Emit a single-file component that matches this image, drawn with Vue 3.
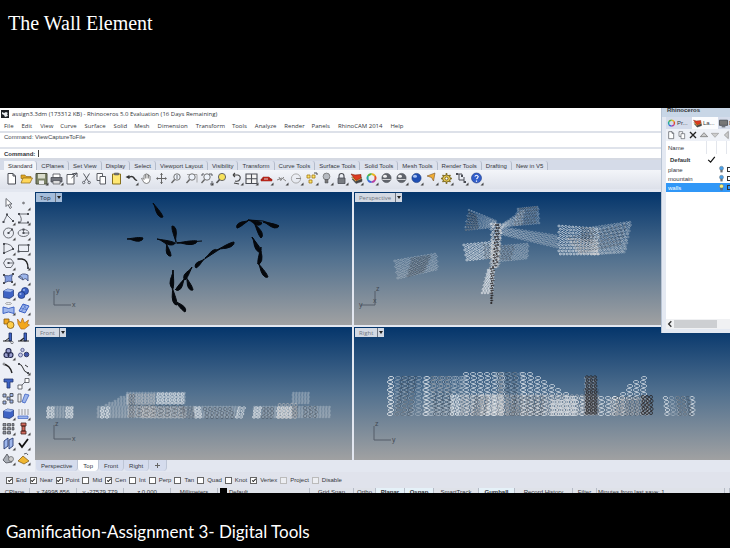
<script setup>
const menus = ['File', 'Edit', 'View', 'Curve', 'Surface', 'Solid', 'Mesh', 'Dimension', 'Transform', 'Tools', 'Analyze', 'Render', 'Panels', 'RhinoCAM 2014', 'Help']
const toolTabs = ['Standard', 'CPlanes', 'Set View', 'Display', 'Select', 'Viewport Layout', 'Visibility', 'Transform', 'Curve Tools', 'Surface Tools', 'Solid Tools', 'Mesh Tools', 'Render Tools', 'Drafting', 'New in V5']
const viewTabs = ['Perspective', 'Top', 'Front', 'Right']
const snaps = [
  ['End', true], ['Near', true], ['Point', true], ['Mid', false], ['Cen', true], ['Int', false], ['Perp', false],
  ['Tan', false], ['Quad', false], ['Knot', false], ['Vertex', true], ['Project', false, true], ['Disable', false, true]
]
const status = [
  ['CPlane'], ['x 74998.856'], ['y -27579.779'], ['z 0.000'], ['Millimeters'], ['Default', 'swatch'], ['Grid Snap'], ['Ortho'],
  ['Planar', 'on'], ['Osnap', 'on'], ['SmartTrack'], ['Gumball', 'on'], ['Record History'], ['Filter'], ['Minutes from last save: 1', 'left'], ['']
]
const layers = [
  { name: 'Default', current: true }, { name: 'plane' }, { name: 'mountain' }, { name: 'walls', selected: true }
]

// Icon shapes: [path, fill, stroke, stroke width] on a 15 x 15 grid
const K = '#4a4d54'
const B = '#3d62c4'
const L = '#9db6ec'
const o = (x, y, r, s = r) => `M${x - r} ${y}a${r} ${s} 0 1 0 ${2 * r} 0a${r} ${s} 0 1 0 ${-2 * r} 0Z`
const dots = (...p) => p.map(([x, y]) => `M${x - 1} ${y - 1}h2v2h-2Z`).join('')
const page = ['M4 2.5h5l2.5 2.5v8H4ZM9 2.5v2.5h2.5', '#fff', K, 1]
const lens = [[o(8, 6, 3.2), '#eef3fb', '#666', 0.9], ['M5.6 8.5L2.5 12', 'none', '#666', 1.4]]
const bulb = c => [[o(7.5, 5.5, 3.4), c, '#666', 0.7], ['M6 8.5h3v3.5h-3Z', '#777', K, 0.5]]
const ball = (a, b) => [[o(7.5, 7, 4.6), a, K, 0.6], [o(6, 5.2, 2, 1.5), b], ['M3.4 8.5h8.2', 'none', b, 0.8]]
const wheel = [
  ['M7.5 3A4 4 0 0 1 11 5', 'none', '#e8b51e', 2], ['M11 5A4 4 0 0 1 11 9', 'none', '#e05030', 2],
  ['M11 9A4 4 0 0 1 7.5 11', 'none', '#b53fa0', 2], ['M7.5 11A4 4 0 0 1 4 9', 'none', '#3b66d8', 2],
  ['M4 9A4 4 0 0 1 4 5', 'none', '#23a7a5', 2], ['M4 5A4 4 0 0 1 7.5 3', 'none', '#56b33c', 2]
]
const stack = [
  ['M3 8l4 4.5 6-2V8Z', '#444', K, 0.5], ['M2.5 6l4 4.5 6-2.5V6Z', '#f2c14b', K, 0.4], ['M2 3l4 1 6-.5V7L7 9.5Z', '#dd3b20', '#812312', 0.6]
]
const top = [
  ['New', [page]],
  ['Open', [['M2 4h4l1 1.5h5v2H2Z', '#e1a723', '#8a6410', 0.6], ['M2 12l2-5h9.5l-2.5 5Z', '#ffd75a', '#8a6410', 0.7]]],
  ['Save', [['M2 2.5h11v10.5H2Z', '#7d8468', '#4c503e', 1], ['M4 3h7v4.5H4Z', '#d9dccb'], ['M5 9.5h5V13H5Z', '#eee']], 1],
  ['Print', [['M4 3h7v4H4Z', '#fff', K, 0.8], ['M2 6.5h11V11H2Z', '#72757d', K, 0.8], ['M4 9.5h7V13H4Z', '#ddd', K, 0.7]], 1],
  ['Notes', [['M3 3.5h7v9.5H3Z', '#fff', K, 0.9], ['M8 3l5-1v4M7.5 7L13 2', 'none', K, 1]]],
  ['Cut', [['M4.5 2.5l5 8M10.5 2.5l-5 8', 'none', K, 0.9], [o(4.7, 11.5, 1.2) + o(10.2, 11.5, 1.2), 'none', K, 0.8]]],
  ['Copy', [['M3 2.5h5.5v7H3Z', '#fff', K, 0.9], ['M6 5.5h5.5V13H6Z', '#fff', K, 0.9]]],
  ['Paste', [['M3.5 3h8v10h-8Z', '#ffe873', '#87701d', 1], ['M5.5 2h4v2h-4Z', '#777', K, 0.5]]],
  ['Undo', [['M4 7Q8 4 10 7t3 2', 'none', '#333', 1.5], ['M1.5 6l4-2v4Z', '#333']], 1],
  ['Pan', [['M3.5 9L2.5 7.5l1-.5L5 8.5V4.2q.8-.8 1.5 0V3.2q.8-.8 1.5 0v.5q.8-.8 1.5 0V5q.8-.8 1.5 0v4q-.5 3.5-3.5 3.5T3.5 9Z', '#fff', '#666', 0.8], ['M6.5 4.2V7.5M8 3.5v4M9.5 4.5v3', 'none', '#666', 0.7]]],
  ['Rotate View', [['M7.5 2v11M3 7.5h9', 'none', '#666', 1], ['M6 4l1.5-2L9 4ZM6 11l1.5 2L9 11ZM4 6l-2 1.5L4 9ZM11 6l2 1.5L11 9Z', '#666']]],
  ['Zoom', [...lens, ['M8 4v4', 'none', K, 0.8]]],
  ['Zoom Window', [['M3 3.5h10v8', 'none', '#888', 0.7], ...lens]],
  ['Zoom Extents', [...lens, ['M3 5V3h2M10 3h3v2M13 10v3h-2', 'none', K, 0.9]], 1],
  ['Zoom Selected', [[o(8, 6, 3.6), '#f7e25a', '#666', 1], ['M5.6 8.5L2.5 12', 'none', '#555', 1.6]]],
  ['Undo View', [['M4 4h5q3 1 2 4t-5 2M4 4l2-2M4 4l2 2M5 12l5 1', 'none', '#444', 1.1]], 1],
  ['Viewports', [['M2 3h11v9.5H2ZM7.5 3v9.5M2 7.7h11', '#f4f4f4', K, 1.1]], 1],
  ['Display', [['M2 8h11v2H2ZM4 6h6l2 2H3Z', '#c92a1d', '#891b12', 0.5], ['M5 8h4', 'none', '#fff', 0.8]], 1],
  ['Sections', [['M3 9l5-2 4 3M5 6l2 4M10 6L7 9', 'none', '#888', 1]], 1],
  ['Circle', [[o(7, 7.5, 4.6), 'none', '#999', 0.8], ['M7 7.5h5', 'none', '#777', 0.8]], 1],
  ['Select', [['M3 4h3v3H3ZM8 4h3v3H8ZM5 9h3v3H5Z', '#ffe66b', '#a37912', 0.8], ['M10 2h3v2', 'none', K, 1]], 1],
  ['Hide', bulb('#b6bac0'), 1],
  ['Lock', [['M5 7V5a2.5 2.5 0 0 1 5 0v2', 'none', K, 1.1], ['M4 7h7v5.5H4Z', '#777b80', K, 0.8]], 1],
  ['Layers', stack, 1],
  ['Color', wheel, 1],
  ['Shade', ball('#60646b', '#f0f0f0')],
  ['Render Preview', ball('#60646b', '#f0f0f0'), 1],
  ['Render', [[o(7.5, 7, 4.6), '#1f4fb4', '#163878', 0.6], [o(6, 5.2, 2, 1.5), '#a9c4f3']], 1],
  ['Spotlight', [['M3 5l8-3-1.5 8-2-3.5Z', '#f1ad34', '#77542b', 0.6]], 1],
  ['Options', [
    ['M7.5 2v11M2 7.5h11M3.5 4l8 7M11.5 4l-8 7', 'none', '#85732c', 1.6],
    [o(7.5, 7.5, 4, 3.5), '#e8ca52', '#665417', 0.8], [o(7.5, 7.5, 1.5), '#fff', '#665417', 0.8]
  ], 1],
  ['Grasshopper', [['M3 3h5v2M5 3v6h5v3M10 6v3', 'none', K, 1], [dots([3, 3], [8, 5], [11, 11]), K]], 1],
  ['Help', [[o(7.5, 7, 5), '#315ecb', '#1e3a83', 0.6], ['M5.8 5.5q1.7-2.5 3.4 0 0 1-1.7 2.5M7.5 9.5v1.3', 'none', '#fff', 1.2]], 1]
]
const cube = [['M2.5 5l4-2 6 1v6l-4 2.5-6-1Z', B, '#1d3373', 0.7], ['M2.5 5l4-2 6 1-3 2Z', L]]
const side = [
  ['Select', [['M5 2.5v8l2-2 2 4 1.5-1-2-3.5h2.5Z', '#fff', K, 0.8]]],
  ['Point', [[o(7.5, 7, 1), '#999', K, 0.5]], 1],
  ['Polyline', [['M2.5 11L6 4l6 6', 'none', K, 0.8], [dots([2.5, 11], [6, 3.5], [12, 10]), K]], 1],
  ['Curve', [['M3 3h8M3 3q4 5 1 9h7', 'none', K, 0.8], [dots([3, 3], [12, 3], [3, 11.5], [12, 11.5]), K]], 1],
  ['Circle', [[o(7.5, 7, 5), 'none', K, 0.8], ['M7.5 7l3-3', 'none', K, 0.8], [dots([7.5, 7], [11, 3.5]), K]], 1],
  ['Ellipse', [[o(7.5, 7, 5.4, 3.5), 'none', K, 0.8], ['M7.5 7V3.5M7.5 7h5', 'none', K, 0.7], [dots([7.5, 7], [7.5, 3.5]), K]], 1],
  ['Arc', [['M3 2.5Q11 3 12 8L3 12Z', 'none', K, 0.8], [dots([3, 3], [12, 8], [3, 12]), K]], 1],
  ['Rectangle', [['M2.5 4h10v6.5h-10Z', 'none', K, 0.9], [dots([2.5, 10.5], [12.5, 4]), K]], 1],
  ['Polygon', [['M5 3h5l3 4-3 4.5H5L2.5 7Z', 'none', K, 0.8], ['M7.5 7h5', 'none', K, 0.8], [dots([7.5, 7]), K]], 1],
  ['Fillet', [['M2 3h4q6 1 6 9', 'none', '#222', 1.3], [dots([2.5, 3], [12, 12]), K]], 1],
  ['Surface', [['M3.5 4.5q4 1 8-1-1.5 3-.5 7-4-1-7 1 1-4-.5-7Z', '#7f9ade', '#26396f', 0.7], [dots([3, 4], [12, 3], [11, 11], [3, 12]), K]], 1],
  ['Loft', [['M2.5 6Q6 1 12 4v6q-2-4-5-1Z', L, '#344275', 0.8], ['M2 6q4-2 5 3', 'none', K, 0.7]], 1],
  ['Box', cube, 1],
  ['Boolean', [[o(9, 5, 3.5), B, '#1d3373', 0.7], [o(5.5, 9, 3.5), B, '#1d3373', 0.7], [o(8, 4, 1) + o(4.5, 8, 1), L]], 1],
  ['Shell', [['M2 6q5.5 3 11 0v6.5q-5.5-3-11 0Z', L, B, 1], [o(7.5, 2.5, 3, 1), 'none', '#888', 0.7]], 1],
  ['Plane', [['M3 10l4-7 6 2-4 7Z', L, B, 1], ['M5 7l6 2M7 3l4 6M10 4l-5 7', 'none', B, 0.6]], 1],
  ['Join', [['M3 3h5v5H3Z', '#f2a71c', '#7f5710', 0.8], [o(9.5, 9, 3.5), '#ffcd47', '#7f5710', 0.8]]],
  ['Explode', [['M1.5 3l3 4 2-5 2 5 4-3-1 4 2 1-5 4H5L2 8Z', '#f2a71c', '#a15917', 0.6]]],
  ['Trim', [['M8 2h2.5v8H8Z', B, '#162959', 0.8], ['M2 10h8M4 10l4-3', 'none', '#222', 1], [o(11, 11.5, 1.2), '#fff', K, 0.7]]],
  ['Split', [['M8 2h2.5v8H8Z', B, '#162959', 0.8], ['M2 10h11M4 10l4-3', 'none', '#222', 1.2]]],
  ['Group', [[o(7.5, 5, 2.5) + o(5.5, 9, 2.5) + o(9.5, 9, 2.5), '#9aa0d0', '#23284d', 1.1]], 1],
  ['Ungroup', [[o(6.5, 4, 1.7) + o(4.5, 9, 2), '#c5c9e4', '#444d85', 0.8], [o(10.5, 8.5, 2.3), '#4358ab', '#23284d', 0.8]]],
  ['Extend', [['M2 3q7 1 9 9', 'none', '#222', 1.4], [o(3, 3, 1), '#fff', K, 0.6]]],
  ['Blend', [['M2 3q4 0 5 4t5 5M9 4l3 2', 'none', '#333', 1], [dots([3, 3], [12, 12]), K]], 1],
  ['Text', [['M3 3h9v3h-3v6H6V6H3Z', B, '#25366c', 0.8]]],
  ['Move', [['M2 9h4v4H2ZM9 2.5h4v4H9Z', '#fff', K, 0.8], ['M6 9l3-3', 'none', K, 0.8]], 1],
  ['Array', [['M2 3h3v3H2ZM9 2.5h3v3H9ZM2 10h3v3H2ZM9 9h3v3H9ZM6 6h3v3H6Z', L, K, 0.9]]],
  ['Rotate', [['M2 3h3v8H2Z', '#eee', K, 0.8], ['M9 3l4 1-4 8-3-1Z', L, B, 0.8]]],
  ['Solid', cube, 1],
  ['Project', [['M2 10h10v2.5H2Z', L, B, 0.7], ['M3 3v6M6 3v6M9 3v6M12 3v6', 'none', '#777', 0.7]], 1],
  ['Grid', [['M2 2.5h3v2.5H2ZM6.5 2.5h3v2.5h-3ZM11 2.5h2v2.5h-2ZM2 6.5h3v2.5H2ZM6.5 6.5h3v2.5h-3ZM11 6.5h2v2.5h-2ZM2 10.5h3V13H2ZM6.5 10.5h3V13h-3Z', '#8d93a3', '#333', 0.6]], 1],
  ['Analyze', [['M5 2h5v3H5ZM6 5h3v5H6ZM5 10h5v3H5Z', '#d26a5e', '#45211d', 0.8]], 1],
  ['Align', [['M3 5l4-3v8l-4 3Z', L, '#26396f', 0.9], ['M8 4l4-2v8l-4 3Z', L, '#26396f', 0.9]], 1],
  ['Check', [['M3 7l3 4 6-8', 'none', '#111', 1.8]], 1],
  ['Mesh', [['M2 9l4-6 5 8-6 1Z', '#a8adb5', K, 0.8], [o(10, 8, 2.5), '#ccc', K, 0.6]], 1],
  ['Pyramid', [['M2 10l5-5 6 5-5 3Z', '#efb632', '#775312', 0.7], ['M8 3q3-2 4 1', 'none', K, 0.9]], 1]
]

// Blades of the plan view: narrow at the first point, swelling toward the second
const blades = [
  [118, 11, 128, 25, -3], [92, 47, 108, 46, -3], [141, 50, 137, 34, -3], [122, 47, 140, 51, -3], [142, 51, 162, 49, -3],
  [131, 51, 136, 64, -3], [182, 58, 199, 50, -3], [170, 66, 182, 58, 2], [169, 67, 161, 76, -3], [214, 28, 202, 36, -3],
  [213, 28, 227, 31, -3], [219, 30, 226, 46, 3], [228, 30, 244, 34, -3], [217, 45, 226, 60, -3], [226, 55, 223, 72, 3],
  [223, 71, 233, 85, -3], [138, 78, 138, 96, -3], [157, 75, 150, 88, -3], [150, 86, 141, 98, 3], [151, 85, 158, 98, -3],
  [137, 95, 142, 113, -3], [139, 108, 150, 120, 3]
].map(([a, b, c, d, w]) => {
  const dx = c - a, dy = d - b, n = Math.hypot(dx, dy)
  const p = (t, s) => `${(a + dx * t + dy / n * s).toFixed(1)} ${(b + dy * t - dx / n * s).toFixed(1)}`
  return `M${p(0, 0)}C${p(0.3, 0)} ${p(0.4, w)} ${p(0.75, w)}Q${p(1, w * 0.8)} ${p(1, 0)}C${p(0.8, -w * 0.4)} ${p(0.5, -w * 0.2)} ${p(0, 0)}Z`
}).join('')
const links = 'M140 51L167 49M185 57L168 68M202 36L214 28L228 29L244 34M217 45L226 57L223 72M138 97L138 78M140 98L150 87'

const ring = (x, y, r, s) => `M${(x - r).toFixed(1)} ${y.toFixed(1)}l${r / 2} ${-s}h${r}l${r / 2} ${s}l${-r / 2} ${s}h${-r}Z`

// Honeycomb standing on a base line, under a top edge running from t0 to t1
function wall(x0, x1, base, t0, t1, dx, dy, lean = 0) {
  let d = ''
  for (let j = 0, y = base; y > Math.min(t0, t1); y -= dy, j++) {
    for (let x = x0; x <= x1; x += dx) {
      if (y < t0 + (t1 - t0) * (x - x0) / (x1 - x0)) continue
      d += ring(x + (j % 2) * dx * 0.15 + lean * j, y, dx * 0.4, dy * 0.36)
    }
  }
  return d
}

// Honeycomb stretched over four corners, clockwise from the upper left
function quad([a, b, c, d, e, f, g, h], nx, ny, r = 1.2, s = 0.8) {
  let out = ''
  for (let i = 0; i <= nx; i++) {
    for (let j = 0; j <= ny; j++) {
      const u = (i + (j % 2) * 0.4) / (nx + 0.4), v = j / ny
      const x = (1 - v) * ((1 - u) * a + u * c) + v * ((1 - u) * g + u * e)
      const y = (1 - v) * ((1 - u) * b + u * d) + v * ((1 - u) * h + u * f)
      out += ring(x, y, r, s)
    }
  }
  return out
}

const views = [
  {
    name: 'Top', box: '0 0 317 133', blades, axis: 'M19 99V113H36', marks: [['y', 21, 101], ['x', 37, 115]], mesh: []
  },
  {
    name: 'Perspective', box: '0 0 376 133', axis: 'M21 99V113H7', marks: [['z', 22, 99], ['y', 5, 115], ['x', 19, 111]],
    mesh: [
      ['soft', quad([41, 69, 82, 62, 83, 77, 44, 86], 12, 6, 1.4, 0.9)],
      ['dark', quad([58, 67, 76, 64, 70, 79, 54, 84], 6, 6, 1.4, 0.9)],
      ['soft', quad([115, 18, 142, 29, 140, 35, 111, 38], 10, 7, 1.1, 0.6) + quad([149, 32, 170, 18, 168, 32, 149, 35], 8, 6, 1.1, 0.6)],
      ['soft', quad([164, 17, 184, 15, 185, 31, 160, 33], 9, 7, 1, 0.8)],
      ['dark', quad([115, 20, 122, 24, 124, 36, 112, 38], 4, 6, 1, 0.7) + quad([166, 17, 183, 15, 181, 30, 160, 33], 6, 5, 1, 0.7)],
      ['soft', quad([145, 35, 203, 44, 203, 55, 147, 42], 17, 5, 1.3, 0.9)],
      ['bright', quad([205, 34, 244, 37, 244, 62, 205, 62], 11, 9, 1.2, 0.9)],
      ['soft', quad([236, 36, 277, 30, 271, 60, 238, 62], 13, 10, 1.2, 0.9)],
      ['soft', quad([246, 37, 276, 31, 270, 59, 240, 62], 7, 8, 1.1, 0.8)],
      ['dark', quad([216, 46, 272, 33, 266, 52, 226, 60], 13, 5, 1, 0.7) + quad([228, 36, 240, 37, 238, 50, 228, 48], 3, 5, 1, 0.7)],
      ['warm', quad([214, 47, 242, 49, 244, 62, 224, 61], 8, 5, 1, 0.8)],
      ['bright', quad([110, 53, 140, 50, 140, 65, 113, 68], 8, 6, 1.3, 0.9)],
      ['soft', quad([142, 55, 174, 52, 173, 66, 143, 69], 10, 6, 1.2, 0.9)],
      ['dark', quad([130, 53, 160, 55, 156, 67, 131, 66], 7, 5, 1, 0.7)],
      ['bright', quad([137, 32, 148, 33, 143, 75, 138, 75], 2, 16, 1, 0.7) + quad([134, 78, 140, 78, 138, 101, 128, 101], 3, 12, 1, 0.7)],
      ['warm', quad([139, 32, 147, 32, 145, 74, 136, 76], 3, 18, 1, 0.7)],
      ['black', quad([142, 33, 145, 33, 143, 73, 139, 75], 1, 14, 0.9, 0.5) + quad([137, 77, 140, 76, 138, 111, 137, 111], 1, 14, 0.7, 0.4)]
    ]
  },
  {
    name: 'Front', box: '0 0 317 133', axis: 'M19 98V112H36', marks: [['z', 20, 99], ['x', 37, 114]],
    mesh: [
      ['soft', wall(13, 39, 90, 78, 78, 3, 2)],
      ['bright', wall(13, 18, 90, 78, 78, 4, 3) + wall(32, 39, 90, 78, 78, 4, 3)],
      ['soft', wall(63, 150, 90, 78, 78, 3, 2) + wall(68, 94, 78, 79, 66, 3, 2) + wall(92, 150, 76, 65, 65, 3, 2)],
      ['bright', wall(123, 150, 76, 65, 65, 4, 3) + wall(67, 76, 90, 78, 78, 5, 3)],
      ['warm', wall(94, 121, 89, 65, 65, 4, 3) + wall(108, 148, 90, 79, 79, 4, 3)],
      ['dark', wall(95, 99, 89, 65, 65, 3, 4) + wall(104, 146, 88, 79, 79, 7, 4)],
      ['soft', wall(150, 203, 90, 78, 78, 3, 2, 0.4)],
      ['bright', wall(161, 166, 90, 78, 78, 4, 3, -0.5) + wall(202, 206, 90, 78, 78, 4, 3, 0.8)],
      ['dark', wall(150, 158, 90, 78, 78, 4, 3, -0.5) + wall(172, 198, 90, 80, 80, 5, 4, -1)],
      ['soft', wall(219, 296, 90, 78, 78, 3, 2) + wall(258, 274, 76, 64, 64, 3, 2)],
      ['bright', wall(219, 223, 90, 78, 78, 4, 3, 0.5) + wall(243, 256, 90, 78, 78, 4, 3)],
      ['dark', wall(228, 238, 90, 78, 78, 4, 4, 0.5) + wall(258, 262, 89, 79, 79, 3, 3) + wall(270, 282, 89, 79, 79, 5, 4)],
      ['warm', wall(244, 262, 90, 77, 77, 4, 4)]
    ]
  },
  {
    name: 'Right', box: '0 0 376 133', axis: 'M20 99V113H37', marks: [['z', 21, 99], ['y', 38, 115]],
    mesh: [
      ['soft', wall(36, 112, 87, 47, 47, 7, 4)],
      ['dark', wall(43, 56, 87, 47, 47, 6, 4, 0.6) + wall(82, 96, 87, 47, 47, 7, 4, -0.4)],
      ['bright', wall(36, 38, 87, 47, 47, 7, 4) + wall(72, 75, 87, 47, 47, 7, 4) + wall(112, 152, 87, 46, 46, 7, 4)],
      ['soft', wall(148, 176, 87, 46, 46, 6, 4, -0.5) + wall(76, 108, 87, 47, 47, 7, 4, 0.5)],
      ['bright', wall(169, 176, 87, 46, 46, 7, 4) + wall(183, 218, 87, 48, 70, 7, 4)],
      ['dark', wall(146, 166, 87, 46, 46, 7, 4)],
      ['bright', wall(98, 104, 87, 68, 68, 5, 3) + wall(128, 146, 87, 68, 68, 6, 3)],
      ['warm', wall(108, 245, 87, 68, 68, 5, 3)],
      ['dark', wall(120, 130, 87, 68, 68, 5, 4, 0.6) + wall(158, 190, 87, 68, 68, 7, 4, 0.5)],
      ['bright', wall(200, 230, 87, 72, 69, 7, 4)],
      ['warm', wall(232, 242, 87, 48, 48, 4, 3)],
      ['dark', wall(231, 243, 87, 62, 62, 4, 3)],
      ['black', wall(233, 241, 86, 48, 48, 4, 3)],
      ['bright', wall(247, 270, 87, 69, 69, 7, 4) + wall(254, 291, 71, 74, 46, 7, 4)],
      ['dark', wall(262, 292, 87, 68, 68, 5, 4, 0.3)],
      ['warm', wall(258, 296, 87, 70, 70, 5, 3)],
      ['black', wall(289, 298, 86, 68, 68, 4, 4)],
      ['bright', wall(313, 316, 87, 68, 68, 6, 4, -0.4) + wall(338, 343, 87, 68, 68, 6, 4)],
      ['soft', wall(319, 336, 87, 68, 68, 6, 4, -0.4)],
      ['dark', wall(326, 336, 87, 68, 68, 5, 4, -0.6)]
    ]
  }
]
const panelTabs = [['Pr...', wheel], ['La...', stack], ['D', [['M2 3h11v7H2Z', '#777', K, 1.2], ['M5 12h5', 'none', K, 1.4]]]]
const panelTools = [
  ['New Layer', [page]], ['New Sublayer', top[6][1]], ['Delete', [['M3 3l9 9M12 3l-9 9', 'none', '#222', 2]]],
  ['Move Up', [['M2 10l5.5-6 5.5 6Z', '#ccc', '#666', 1]]], ['Move Down', [['M2 5l5.5 6L13 5Z', '#ccc', '#999', 1]]],
  ['Move Left', [['M11 2L5 7.5l6 5.5Z', '#ccc', '#888', 1]]]
]
const blueBulb = bulb('#4aa0e8')
const litBulb = bulb('#f4ee7a')
</script>

<template>
  <main class="slide">
    <h1>The Wall Element</h1>

    <section class="rhino">
      <header class="titlebar">
        <svg class="logo" viewBox="0 0 8 8"><path d="M0 0h8v8H0Z" fill="#1c2025" /><path d="M1 2l2 1 2-1 2 1-1 1 1 2-3 1-1-2-2-1Z" fill="#e9edf0" /></svg>
        <span>assign3.3dm (173312 KB) - Rhinoceros 5.0 Evaluation (16 Days Remaining)</span>
      </header>
      <nav class="menubar">
        <a v-for="m in menus" :key="m" href="#">{{ m }}</a>
      </nav>
      <div class="history">Command: ViewCaptureToFile</div>
      <div class="prompt">
        <label for="command">Command:</label>
        <input id="command" type="text" autocomplete="off">
      </div>
      <div class="tool-tabs">
        <button v-for="(t, i) in toolTabs" :key="t" type="button" :class="{ active: i === 0 }">{{ t }}</button>
      </div>
      <div class="toolbar">
        <button v-for="t in top" :key="t[0]" class="tool" type="button" :aria-label="t[0]">
          <svg viewBox="0 0 15 15">
            <path v-for="(s, i) in t[1]" :key="i" :d="s[0]" :fill="s[1]" :stroke="s[2]" :stroke-width="s[3]" />
            <path v-if="t[2]" d="M14.5 11.5v3h-3Z" fill="#444" />
          </svg>
        </button>
      </div>

      <div class="workspace">
        <aside class="palette">
          <button v-for="t in side" :key="t[0]" class="tool" type="button" :aria-label="t[0]">
            <svg viewBox="0 0 15 15">
              <path v-for="(s, i) in t[1]" :key="i" :d="s[0]" :fill="s[1]" :stroke="s[2]" :stroke-width="s[3]" />
              <path v-if="t[2]" d="M14.5 11.5v3h-3Z" fill="#444" />
            </svg>
          </button>
        </aside>
        <div class="stage">
          <div class="viewports">
            <div v-for="v in views" :key="v.name" class="viewport">
              <svg class="scene" :viewBox="v.box">
                <path v-for="(m, i) in v.mesh" :key="i" :class="['mesh', m[0]]" :d="m[1]" />
                <path v-if="v.blades" class="blades" :d="v.blades" />
                <path v-if="v.blades" class="links" :d="links" />
                <path class="axis" :d="v.axis" />
                <text v-for="a in v.marks" :key="a[0]" class="mark" :x="a[1]" :y="a[2]">{{ a[0] }}</text>
              </svg>
              <button type="button" class="view-name" :class="{ active: v.name === 'Top' }">
                <span>{{ v.name }}</span><i></i>
              </button>
            </div>
          </div>
          <div class="view-tabs">
            <button v-for="t in viewTabs" :key="t" type="button" :class="{ active: t === 'Top' }">{{ t }}</button>
            <button type="button" aria-label="New viewport"><svg class="plus" viewBox="0 0 7 7"><path d="M3.5 1v5M1 3.5h5" stroke="#666" /></svg></button>
          </div>
        </div>
      </div>

      <div class="snaps">
        <label v-for="s in snaps" :key="s[0]" :class="{ muted: s[2] }">
          <input type="checkbox" :checked="s[1]">{{ s[0] }}
        </label>
      </div>
      <footer class="status">
        <span v-for="(s, i) in status" :key="i" :class="s[1]">{{ s[0] }}</span>
      </footer>

      <aside class="layers">
        <div class="panel-title">Rhinoceros</div>
        <div class="panel-tabs">
          <button v-for="(t, i) in panelTabs" :key="t[0]" type="button" :class="{ active: i === 1 }">
            <svg viewBox="0 0 15 15"><path v-for="(s, j) in t[1]" :key="j" :d="s[0]" :fill="s[1]" :stroke="s[2]" :stroke-width="s[3]" /></svg>{{ t[0] }}
          </button>
        </div>
        <div class="panel-tools">
          <button v-for="t in panelTools" :key="t[0]" type="button" :aria-label="t[0]">
            <svg viewBox="0 0 15 15"><path v-for="(s, j) in t[1]" :key="j" :d="s[0]" :fill="s[1]" :stroke="s[2]" :stroke-width="s[3]" /></svg>
          </button>
        </div>
        <div class="panel-list">
          <table>
            <thead><tr><th>Name</th><th></th><th></th><th></th></tr></thead>
            <tbody>
              <tr v-for="l in layers" :key="l.name" :class="{ current: l.current, selected: l.selected }">
                <td>{{ l.name }}</td>
                <td><svg v-if="l.current" viewBox="0 0 15 15"><path d="M2 8l4 4 7-9" fill="none" stroke="#111" stroke-width="2" /></svg></td>
                <td><svg v-if="!l.current" viewBox="0 0 15 15"><path v-for="(s, j) in (l.selected ? litBulb : blueBulb)" :key="j" :d="s[0]" :fill="s[1]" :stroke="s[2]" :stroke-width="s[3]" /></svg></td>
                <td><i v-if="!l.current"></i></td>
              </tr>
            </tbody>
          </table>
        </div>
        <div class="scroll"><svg viewBox="0 0 6 6"><path d="M4 1L2 3l2 2" fill="none" stroke="#333" /></svg><i></i></div>
      </aside>
    </section>

    <p class="caption">Gamification-Assignment 3- Digital Tools</p>
  </main>
</template>

<style>
body {
  margin: 0;
  background: #000;
}
</style>

<style scoped>
.slide {
  min-height: 100vh;
  box-sizing: border-box;
  background: #000;
  color: #fff;
  padding: 9px 0 4px;
}
h1 {
  margin: 0 0 71px;
  padding: 0 8px;
  font: 400 20px/28px "Liberation Serif", serif;
}
.caption {
  margin: 0;
  padding: 27px 6px 0;
  font: 400 17px/24px Lato, sans-serif;
}
.rhino {
  position: relative;
  overflow: hidden;
  background: #fff;
  color: #33363c;
  font: 6px/8px "Liberation Sans", sans-serif;
}
button {
  padding: 0;
  border: 0;
  background: none;
  color: inherit;
  font: inherit;
  white-space: nowrap;
}
a {
  color: inherit;
  text-decoration: none;
}
svg {
  display: block;
}
.titlebar {
  display: flex;
  align-items: center;
  gap: 3px;
  height: 12px;
  padding: 0 1px;
  font-family: "Open Sans", sans-serif;
}
.logo {
  width: 8px;
  height: 8px;
}
.menubar {
  display: flex;
  align-items: center;
  height: 11px;
  padding: 0 4px;
  border-bottom: 2px solid #dde1e9;
  font-family: "Open Sans", sans-serif;
}
.menubar a {
  margin-right: 8px;
}
.menubar a:nth-child(3n) {
  margin-right: 7px;
}
.history {
  height: 14px;
  padding: 0 4px;
  border-bottom: 2px solid #dfe3eb;
  color: #41444a;
}
.prompt {
  display: flex;
  align-items: center;
  gap: 3px;
  height: 9px;
  padding: 0 4px;
  border-bottom: 2px solid #d5d9e2;
  font-weight: 700;
}
.prompt input {
  flex: 1;
  height: 7px;
  padding: 0 2px;
  border: 0;
  border-left: 1px solid #444;
  outline: 0;
  background: none;
  font: inherit;
}
.tool-tabs {
  display: flex;
  align-items: flex-end;
  height: 10px;
  padding: 0 4px;
  background: #d5dbe8;
}
.tool-tabs button {
  height: 9px;
  padding: 0 4px;
  border-right: 1px solid #b4bccb;
  border-radius: 0 3px 0 0;
  background: #dce1ec;
}
.tool-tabs button.active {
  background: #f3f5f9;
}
.toolbar {
  display: flex;
  height: 19px;
  padding: 1px 4px 0;
  background: linear-gradient(#f3f5f9, #dde1ea);
  box-sizing: border-box;
}
.tool {
  width: 15px;
  height: 15px;
}
.tool svg {
  width: 15px;
  height: 15px;
}
.workspace {
  display: flex;
  padding-top: 3px;
  background: #e3e7f0;
}
.palette {
  display: grid;
  grid-template-columns: 15px 15px;
  align-content: start;
  width: 35px;
  box-sizing: border-box;
  padding: 4px 0 0 1px;
  background: #eceff6;
}
.stage {
  flex: 1;
  min-width: 0;
}
.viewports {
  display: grid;
  grid-template-columns: 317fr 376fr;
  gap: 2px;
}
.viewport {
  position: relative;
  background: linear-gradient(#04356b, #52718f 50%, #a0a1a2);
}
.scene {
  width: 100%;
}
.mesh {
  fill: none;
  stroke-width: 0.5;
}
.soft {
  stroke: #d3d9df;
  opacity: 0.75;
}
.bright {
  stroke: #f8fafc;
  stroke-width: 0.7;
  opacity: 0.9;
}
.warm {
  stroke: #dcd2ca;
  opacity: 0.85;
}
.dark {
  stroke: #363c44;
  opacity: 0.7;
}
.black {
  stroke: #25201f;
  stroke-width: 0.8;
}
.blades {
  fill: #05080d;
  stroke: #05080d;
  stroke-width: 1;
}
.links {
  fill: none;
  stroke: #05080d;
  stroke-width: 1;
}
.axis {
  fill: none;
  stroke: #555d68;
  stroke-width: 1;
}
.mark {
  fill: #434a54;
  font: 7px "Liberation Sans", sans-serif;
}
.view-name {
  position: absolute;
  top: 1px;
  left: 1px;
  display: flex;
  align-items: center;
  height: 9px;
  padding-left: 4px;
  background: #d3d9e3;
  color: #71767f;
  font-family: "Open Sans", sans-serif;
}
.view-name.active {
  background: #a5bdda;
  color: #17253a;
}
.view-name i {
  margin-left: 4px;
  padding: 3px 1px;
  border-left: 1px solid #6d7582;
}
.view-name i::after {
  content: "";
  display: block;
  border: 2px solid transparent;
  border-top: 3px solid #222;
  border-bottom: 0;
}
.view-tabs {
  display: flex;
  height: 12px;
  padding-left: 1px;
}
.view-tabs button {
  height: 11px;
  padding: 0 5px;
  border-right: 1px solid #bdc5d5;
  border-radius: 0 0 4px 4px;
  background: #d5dced;
}
.view-tabs button.active {
  background: #fff;
}
.plus {
  width: 7px;
  height: 7px;
}
.snaps {
  display: flex;
  align-items: center;
  gap: 3px;
  height: 16px;
  padding: 0 6px;
  background: #e0e3ec;
}
.snaps label {
  display: flex;
  align-items: center;
  gap: 3px;
}
.snaps input {
  display: grid;
  place-items: center;
  appearance: none;
  width: 7px;
  height: 7px;
  margin: 0;
  border: 1px solid #666;
  background: #fff;
}
.snaps input:checked::after {
  content: "";
  width: 1px;
  height: 3px;
  border: solid #222;
  border-width: 0 1px 1px 0;
  transform: rotate(45deg);
}
.snaps .muted input {
  border-color: #bbb;
  background: #eceef2;
}
.status {
  display: grid;
  grid-template-columns: 30px 47px 47px 47px 47px 92px 44px 22px 29px 29px 45px 36px 58px 24px 1fr 5px;
  height: 5px;
  overflow: hidden;
  background: #dfe2e9;
  text-align: center;
  white-space: nowrap;
}
.status span {
  height: 8px;
  border-right: 1px solid #b6bcc7;
}
.status .on {
  background: #e5f1f8;
  font-weight: 700;
}
.status .left {
  padding-left: 1px;
  text-align: left;
}
.status .swatch {
  display: flex;
  gap: 2px;
  padding-left: 2px;
}
.status .swatch::before {
  content: "";
  width: 7px;
  height: 7px;
  background: #000;
}
.layers {
  position: absolute;
  top: 0;
  right: 0;
  width: 69px;
  box-sizing: border-box;
  padding: 0 0 4px 4px;
  overflow: hidden;
  border-left: 1px solid #b8c4d4;
  background: #e4e9f2;
}
.panel-title {
  height: 9px;
  margin-left: -4px;
  padding-left: 5px;
  background: #c8d6e6;
  font-weight: 700;
  line-height: 4px;
}
.panel-tabs {
  display: flex;
  width: 80px;
  height: 12px;
}
.panel-tabs button {
  display: flex;
  flex: none;
  align-items: center;
  width: 26px;
  background: #d5dceb;
}
.panel-tabs button.active {
  background: #fbfcfe;
}
.panel-tabs svg {
  width: 11px;
  height: 11px;
}
.panel-tools {
  display: flex;
  width: 70px;
  height: 12px;
  align-items: center;
  background: #eef1f7;
}
.panel-tools button {
  flex: none;
  width: 11px;
}
.panel-tools svg {
  width: 10px;
  height: 10px;
}
.panel-list {
  height: 178px;
  background: #fff;
}
table {
  width: 72px;
  table-layout: fixed;
  border-collapse: collapse;
}
th {
  width: 38px;
  height: 13px;
  padding: 0 0 0 2px;
  font-weight: 400;
  text-align: left;
}
th + th {
  width: 9px;
  padding: 0;
  border-left: 1px solid #e3e6ec;
}
th:last-child {
  width: auto;
}
td {
  height: 9px;
  padding: 0;
}
td:first-child {
  padding-left: 2px;
}
td svg {
  width: 9px;
  height: 9px;
}
td i {
  display: block;
  width: 4px;
  height: 3px;
  border: 1px solid #333;
}
.current td {
  height: 11px;
  font-weight: 700;
}
.current td:first-child {
  padding-left: 4px;
}
.selected {
  background: #3097f7;
  color: #fff;
}
.scroll {
  display: flex;
  align-items: center;
  height: 10px;
  background: #f0f1f3;
}
.scroll svg {
  width: 8px;
  height: 8px;
}
.scroll i {
  width: 43px;
  height: 8px;
  background: #cdcfd2;
}
</style>
